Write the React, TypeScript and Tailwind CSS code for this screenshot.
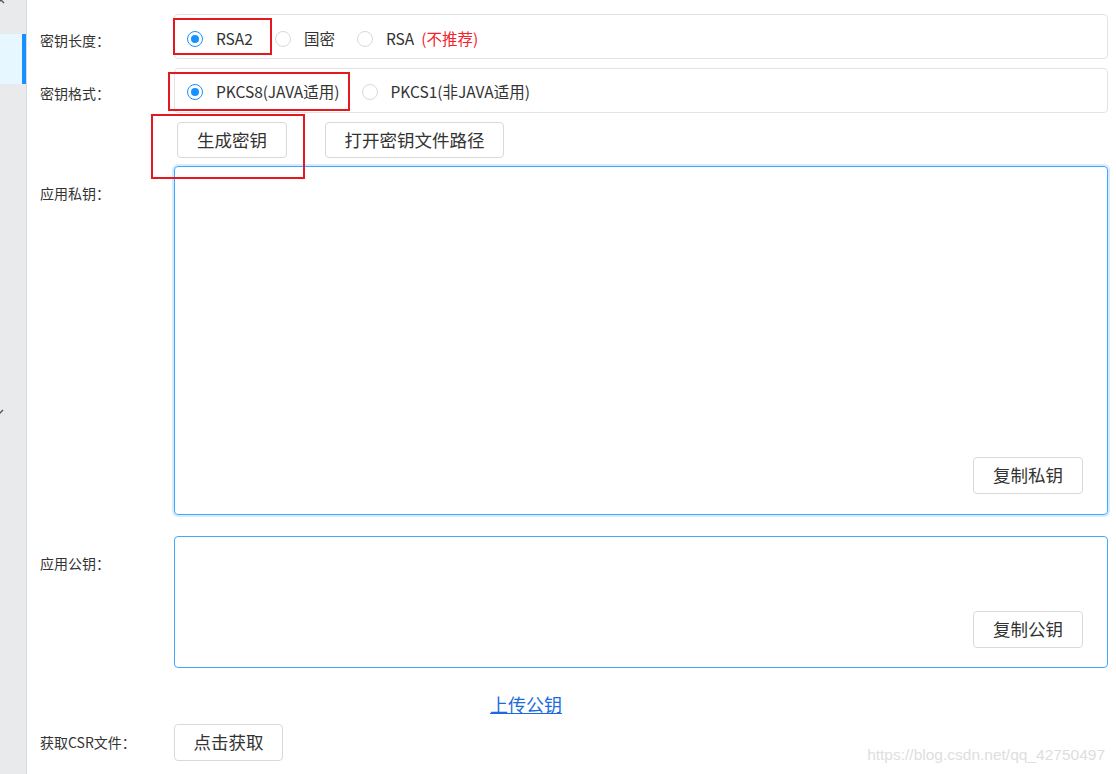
import React from "react";

function Radio({ label, checked, extra }: { label: string; checked?: boolean; extra?: string }) {
  return (
    <label className="flex items-center">
      <span
        className={
          checked
            ? "flex h-4 w-4 items-center justify-center rounded-full border border-[#1890ff] bg-white"
            : "flex h-4 w-4 items-center justify-center rounded-full border border-[#d9d9d9] bg-white"
        }
      >
        {checked && <span className="h-2 w-2 rounded-full bg-[#1890ff]" />}
      </span>
      <span className="pl-[13px] text-[15.5px] text-[#333]">
        {label}
        {extra && <span className="pl-[7px] text-[#f5222d]">{extra}</span>}
      </span>
    </label>
  );
}

function Btn({ children, className = "" }: { children: React.ReactNode; className?: string }) {
  return (
    <button
      className={
        "flex items-center justify-center rounded-[4px] border border-[#d9d9d9] bg-white text-[17.5px] text-[#333] " +
        className
      }
    >
      {children}
    </button>
  );
}

function Label({ children, className = "" }: { children: React.ReactNode; className?: string }) {
  return <div className={"w-[134px] shrink-0 text-[14px] text-[#333] " + className}>{children}</div>;
}

export default function App() {
  return (
    <div className="relative flex h-[774px] w-[1116px] overflow-hidden bg-white font-['Noto_Sans_CJK_SC','Microsoft_YaHei',sans-serif]">
      {/* sidebar */}
      <aside className="flex w-[27px] shrink-0 flex-col border-r border-[#d8d9dc] bg-[#e9eaec]">
        <div className="h-[34px]">
          <svg width="8" height="6" viewBox="0 0 8 6" className="-ml-[3px] -mt-[2px]">
            <path d="M1 5 L4 2 L7 5" stroke="#555" strokeWidth="1.4" fill="none" />
          </svg>
        </div>
        <div className="flex h-[50px]">
          <div className="flex-1 bg-[#e6f7ff]" />
          <div className="w-[4px] bg-[#1890ff]" />
        </div>
        <div className="h-[325px]" />
        <svg width="8" height="6" viewBox="0 0 8 6" className="-ml-[4px]">
          <path d="M1 1 L4 4 L7 1" stroke="#555" strokeWidth="1.4" fill="none" />
        </svg>
      </aside>

      {/* main */}
      <main className="flex flex-1 flex-col pl-[13px] pr-[8px]">
        <div className="flex h-[14px] justify-end pr-[33px]">
          <a className="-mt-[19px] text-[15px] leading-[20px] text-[#1a6be0] underline">修改密钥</a>
        </div>

        <div className="flex">
          <Label className="pt-[16px]">密钥长度：</Label>
          <div className="flex h-[45px] flex-1 items-center gap-[22px] rounded-[4px] border border-[#e3e3e3] pl-[12px] pt-[4px]">
            <Radio label="RSA2" checked />
            <Radio label="国密" />
            <Radio label="RSA" extra="(不推荐)" />
          </div>
        </div>

        <div className="mt-[9px] flex">
          <Label className="pt-[15px]">密钥格式：</Label>
          <div className="flex h-[45px] flex-1 items-center gap-[22px] rounded-[4px] border border-[#e3e3e3] pl-[12px] pt-[3px]">
            <Radio label="PKCS8(JAVA适用)" checked />
            <Radio label="PKCS1(非JAVA适用)" />
          </div>
        </div>

        <div className="mt-[9px] flex">
          <Label />
          <div className="flex gap-[38px] pl-[3px]">
            <Btn className="h-[36px] w-[110px]">生成密钥</Btn>
            <Btn className="h-[36px] w-[179px]">打开密钥文件路径</Btn>
          </div>
        </div>

        <div className="mt-[8px] flex">
          <Label className="pt-[17px]">应用私钥：</Label>
          <div className="flex h-[349px] flex-1 items-end justify-end rounded-[4px] border border-[#40a9ff] pb-[20px] pr-[24px] shadow-[0_0_0_2px_rgba(24,144,255,0.18)]">
            <Btn className="h-[37px] w-[110px]">复制私钥</Btn>
          </div>
        </div>

        <div className="mt-[21px] flex">
          <Label className="pt-[17px]">应用公钥：</Label>
          <div className="flex h-[132px] flex-1 items-end justify-end rounded-[4px] border border-[#40a9ff] pb-[19px] pr-[24px]">
            <Btn className="h-[37px] w-[110px]">复制公钥</Btn>
          </div>
        </div>

        <div className="mt-[24px] flex h-[24px]">
          <Label />
          <a className="pl-[316px] text-[18px] leading-[24px] text-[#1a6be0] underline">上传公钥</a>
        </div>

        <div className="mt-[8px] flex items-center">
          <Label>获取CSR文件：</Label>
          <Btn className="h-[37px] w-[109px]">点击获取</Btn>
        </div>
      </main>

      {/* annotation boxes */}
      <div className="absolute left-[173px] top-[18px] h-[37px] w-[99px] border-2 border-[#e4181e]" />
      <div className="absolute left-[168px] top-[72px] h-[39px] w-[182px] border-2 border-[#e4181e]" />
      <div className="absolute left-[151px] top-[114px] h-[65px] w-[154px] border-2 border-[#e4181e]" />

      {/* watermark */}
      <div className="absolute bottom-[8px] right-[11px] font-['Liberation_Sans',Arial,sans-serif] text-[15.5px] text-[#dedede]">
        https://blog.csdn.net/qq_42750497
      </div>
    </div>
  );
}
